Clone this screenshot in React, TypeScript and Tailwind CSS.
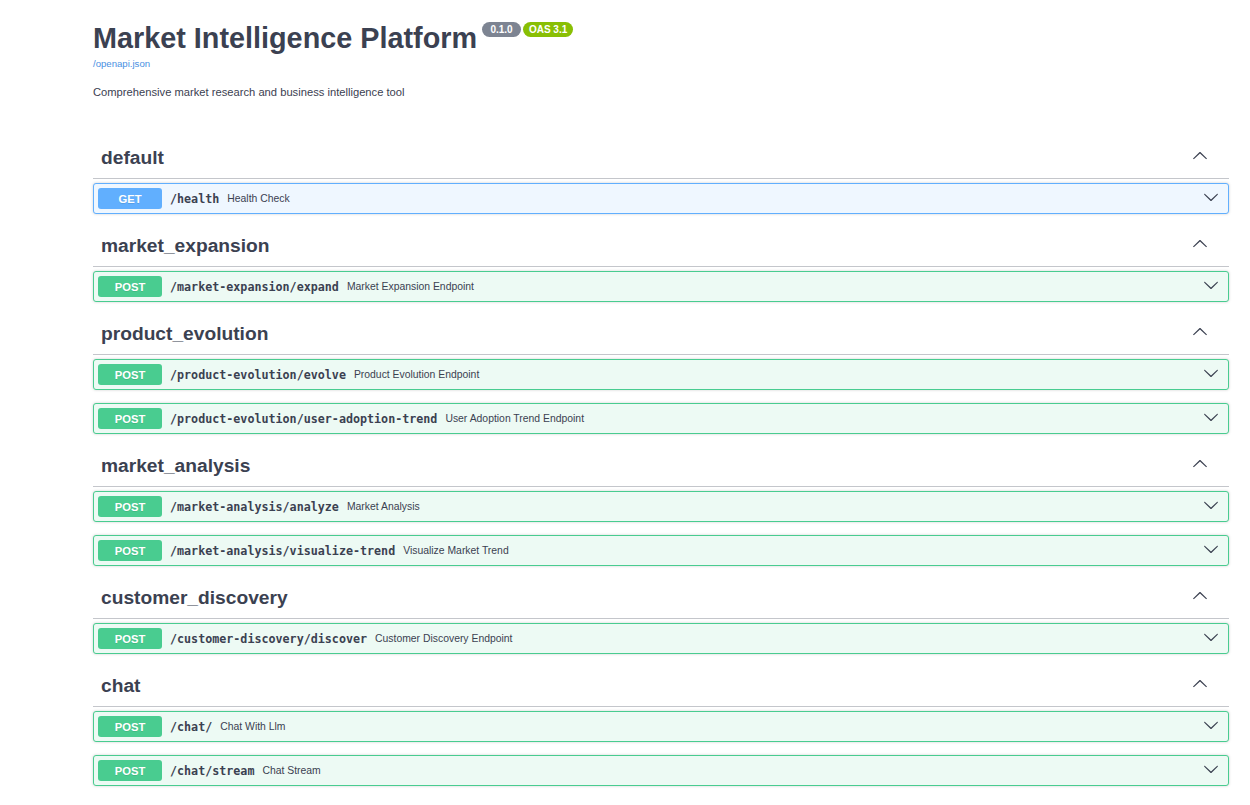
import React from "react";

type Op = { method: "GET" | "POST"; path: string; summary: string };
type Tag = { name: string; ops: Op[] };

const tags: Tag[] = [
  { name: "default", ops: [{ method: "GET", path: "/health", summary: "Health Check" }] },
  {
    name: "market_expansion",
    ops: [{ method: "POST", path: "/market-expansion/expand", summary: "Market Expansion Endpoint" }],
  },
  {
    name: "product_evolution",
    ops: [
      { method: "POST", path: "/product-evolution/evolve", summary: "Product Evolution Endpoint" },
      {
        method: "POST",
        path: "/product-evolution/user-adoption-trend",
        summary: "User Adoption Trend Endpoint",
      },
    ],
  },
  {
    name: "market_analysis",
    ops: [
      { method: "POST", path: "/market-analysis/analyze", summary: "Market Analysis" },
      { method: "POST", path: "/market-analysis/visualize-trend", summary: "Visualize Market Trend" },
    ],
  },
  {
    name: "customer_discovery",
    ops: [
      {
        method: "POST",
        path: "/customer-discovery/discover",
        summary: "Customer Discovery Endpoint",
      },
    ],
  },
  {
    name: "chat",
    ops: [
      { method: "POST", path: "/chat/", summary: "Chat With Llm" },
      { method: "POST", path: "/chat/stream", summary: "Chat Stream" },
    ],
  },
];

const Arrow = ({ up = false }: { up?: boolean }) => (
  <svg
    width="16"
    height="16"
    viewBox="0 0 20 20"
    className={up ? "rotate-180" : ""}
    fill="#3b4151"
  >
    <path d="M17.418 6.109c.272-.268.709-.268.979 0s.271.701 0 .969l-7.908 7.83c-.27.268-.707.268-.979 0l-7.908-7.83c-.27-.268-.27-.701 0-.969.271-.268.709-.268.979 0L10 13.25l7.418-7.141z" />
  </svg>
);

const OpRow = ({ op }: { op: Op }) => {
  const isGet = op.method === "GET";
  return (
    <div
      className={`flex items-center h-[31px] mb-[13px] pl-[4px] pr-[9px] border rounded-[3px] shadow-[0_0_3px_rgba(0,0,0,0.19)] ${
        isGet ? "bg-[#eff7ff] border-[#61affe]" : "bg-[#edfaf4] border-[#49cc90]"
      }`}
    >
      <span
        className={`w-[64px] h-[21px] pt-[1px] flex items-center justify-center rounded-[3px] text-white font-bold text-[11.2px] [text-shadow:0_1px_0_rgba(0,0,0,0.1)] ${
          isGet ? "bg-[#61affe]" : "bg-[#49cc90]"
        }`}
      >
        {op.method}
      </span>
      <span className="px-[8px] pt-[2px] text-[#3b4151] font-semibold text-[11.7px] font-['DejaVu_Sans_Mono',monospace]">
        {op.path}
      </span>
      <span className="pt-[1px] text-[#3b4151] text-[10.4px]">{op.summary}</span>
      <span className="ml-auto flex items-center -translate-y-[2px]">
        <Arrow />
      </span>
    </div>
  );
};

export default function App() {
  return (
    <div className="bg-white min-h-screen font-['Liberation_Sans',Arial,sans-serif]">
      <div className="ml-[93px] w-[1136px] pt-[22px]">
        <div className="flex items-start">
          <h2 className="text-[28.8px] leading-[32px] font-bold text-[#3b4151]">
            Market Intelligence Platform
          </h2>
          <span className="ml-[5px] w-[39px] h-[15px] flex items-center justify-center rounded-full bg-[#7d8492] text-white font-bold text-[10px]">
            0.1.0
          </span>
          <span className="ml-[2px] w-[50px] h-[15px] flex items-center justify-center rounded-full bg-[#89bf04] text-white font-bold text-[10px]">
            OAS 3.1
          </span>
        </div>
        <div className="mt-[4px] h-[12px] leading-[12px] text-[9.6px] text-[#4990e2]">/openapi.json</div>
        <p className="mt-[15px] h-[14px] leading-[14px] text-[11.2px] text-[#3b4151]">
          Comprehensive market research and business intelligence tool
        </p>
        <div className="mt-[40px]">
          {tags.map((tag) => (
            <div key={tag.name}>
              <div className="flex items-center h-[40px] mb-[4px] pl-[8px] pr-[21px] border-b border-[#c4c6cb]">
                <h3 className="text-[19.2px] font-bold text-[#3b4151]">{tag.name}</h3>
                <span className="ml-auto flex items-center -translate-y-[3px]">
                  <Arrow up />
                </span>
              </div>
              {tag.ops.map((op) => (
                <OpRow key={op.path} op={op} />
              ))}
            </div>
          ))}
        </div>
      </div>
    </div>
  );
}
